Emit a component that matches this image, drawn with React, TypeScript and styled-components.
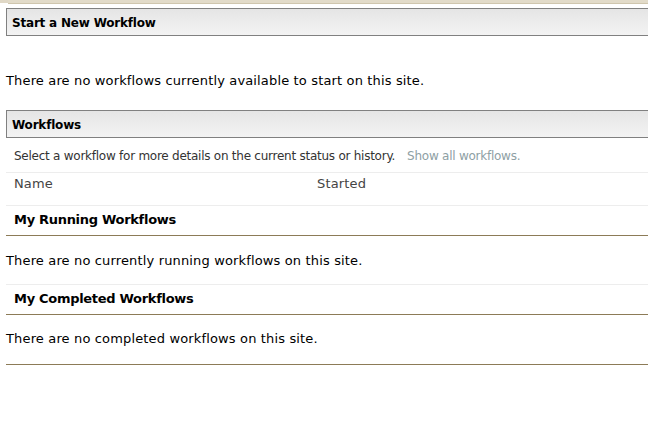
import React from "react";
import styled, { createGlobalStyle } from "styled-components";

const Global = createGlobalStyle`
  html, body { margin: 0; padding: 0; background: #fff; }
  body { font-family: "DejaVu Sans", Verdana, sans-serif; color: #000; }
`;

const TopBar = styled.div`
  display: flex;
  height: 8px;
`;
const TopCorner = styled.div`
  width: 8px;
  border-top: 3px solid #e0d8c6;
  background: #fff;
`;
const TopStrip = styled.div`
  flex: 1;
  height: 3px;
  background: #e2dbc9;
  border-bottom: 1px solid #cfc6ae;
`;

const Page = styled.div`
  padding-left: 6px;
`;

const SectionHeader = styled.div`
  height: 26px;
  border: 1px solid #808080;
  border-right: none;
  background: linear-gradient(#e5e5e5, #f3f3f3);
  display: flex;
  align-items: center;
  padding-left: 5px;
  padding-top: 1px;
  box-sizing: border-box;
  height: 28px;
  font-family: "DejaVu Sans", Tahoma, sans-serif;
  font-weight: bold;
  font-size: 12px;
  letter-spacing: -0.2px;
`;

const Message = styled.div<{ $top: number; $bottom: number }>`
  font-family: "DejaVu Sans", Verdana, sans-serif;
  font-size: 13px;
  letter-spacing: 0.15px;
  line-height: 16px;
  padding-top: ${(p) => p.$top}px;
  padding-bottom: ${(p) => p.$bottom}px;
`;

const Intro = styled.div`
  display: flex;
  gap: 12px;
  padding: 10px 8px 8px;
  font-family: "DejaVu Sans", Tahoma, sans-serif;
  font-size: 12px;
  letter-spacing: -0.25px;
  line-height: 16px;
  color: #333;
  border-bottom: 1px solid #ededed;
`;
const Link = styled.span`
  color: #8ea0a4;
`;

const ColumnRow = styled.div`
  display: grid;
  grid-template-columns: 303px 1fr;
  padding: 3px 8px 13px;
  font-family: "DejaVu Sans", Verdana, sans-serif;
  font-size: 13px;
  letter-spacing: 0.15px;
  line-height: 16px;
  color: #444;
  border-bottom: 1px solid #ededed;
`;

const GroupTitle = styled.div<{ $topLine?: boolean }>`
  padding: 6px 8px 7px;
  font-family: "DejaVu Sans", Tahoma, sans-serif;
  font-weight: bold;
  font-size: 13px;
  letter-spacing: -0.3px;
  line-height: 16px;
  border-top: ${(p) => (p.$topLine ? "1px solid #ededed" : "none")};
  border-bottom: 1px solid #8c7b57;
`;

const Rule = styled.div`
  border-bottom: 1px solid #8c7b57;
`;

export default function App() {
  return (
    <>
      <Global />
      <TopBar>
        <TopCorner />
        <TopStrip />
      </TopBar>
      <Page>
        <SectionHeader>Start a New Workflow</SectionHeader>
        <Message $top={37} $bottom={21}>
          There are no workflows currently available to start on this site.
        </Message>
        <SectionHeader>Workflows</SectionHeader>
        <Intro>
          <span>Select a workflow for more details on the current status or history.</span>
          <Link>Show all workflows.</Link>
        </Intro>
        <ColumnRow>
          <span>Name</span>
          <span>Started</span>
        </ColumnRow>
        <GroupTitle>My Running Workflows</GroupTitle>
        <Message $top={17} $bottom={15}>
          There are no currently running workflows on this site.
        </Message>
        <GroupTitle $topLine>My Completed Workflows</GroupTitle>
        <Message $top={16} $bottom={17}>
          There are no completed workflows on this site.
        </Message>
        <Rule />
      </Page>
    </>
  );
}
